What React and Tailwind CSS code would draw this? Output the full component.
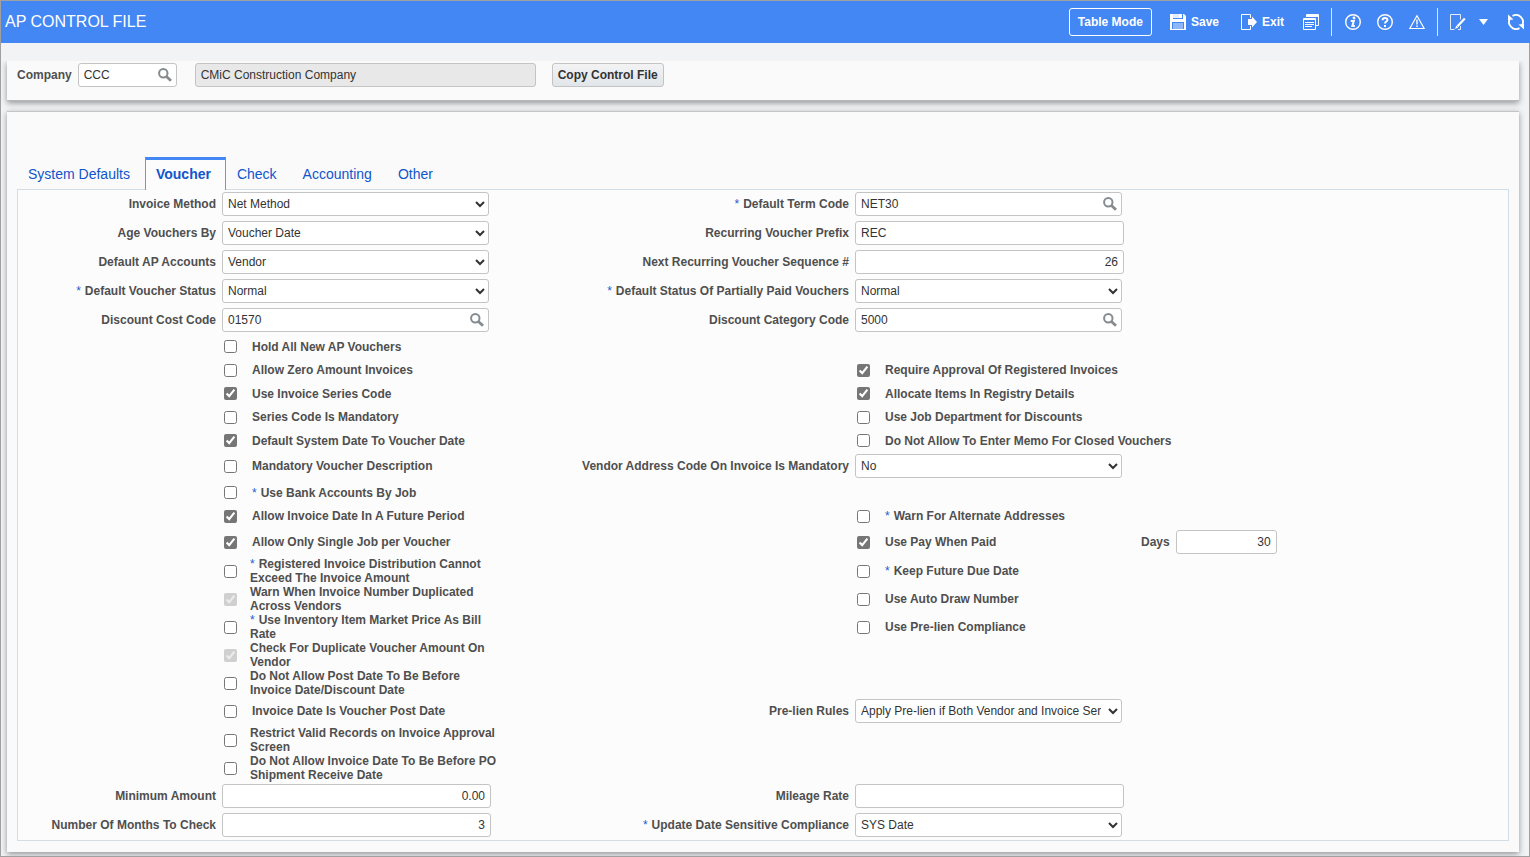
import { useId, useState } from 'react';

const TABS = ['System Defaults', 'Voucher', 'Check', 'Accounting', 'Other'];

const FIELD = 'h-6 rounded-[3px] border border-[#c4c4c4] bg-white text-xs text-[#333]';

const Star = () => <span className="mr-1 font-normal text-[#1a5dd0]">*</span>;

function Row({ size = 'field', children }) {
  const heights = { field: 'h-[29px] pb-px', double: 'h-7', check: 'h-6', tight: 'h-[23px]' };
  return (
    <div className={`grid grid-cols-[198px_269px_352px_1fr] items-center gap-x-1.5 ${heights[size]}`}>
      {children}
    </div>
  );
}

function Label({ id, star, children }) {
  return (
    <label htmlFor={id} className="text-right whitespace-nowrap">
      {star && <Star />}{children}
    </label>
  );
}

function SelectField({ label, star, options }) {
  const id = useId();
  return (
    <>
      <Label id={id} star={star}>{label}</Label>
      <select id={id} className={`${FIELD} w-[267px] pr-1 pl-px`}>
        {options.map(o => <option key={o}>{o}</option>)}
      </select>
    </>
  );
}

function TextField({ label, star, value = '', numeric }) {
  const id = useId();
  return (
    <>
      <Label id={id} star={star}>{label}</Label>
      <input id={id} type="text" defaultValue={value} className={`${FIELD} w-[269px] px-[5px] ${numeric ? 'text-right' : ''}`} />
    </>
  );
}

function Lookup({ id, value, className }) {
  return (
    <div className={`${FIELD} flex items-center pr-1 ${className}`}>
      <input id={id} type="text" defaultValue={value} className="h-full min-w-0 flex-1 bg-transparent pl-[5px] outline-none" />
      <button type="button" aria-label="Search" className="shrink-0">
        <SearchIcon />
      </button>
    </div>
  );
}

function LookupField({ label, star, value }) {
  const id = useId();
  return (
    <>
      <Label id={id} star={star}>{label}</Label>
      <Lookup id={id} value={value} className="w-[267px]" />
    </>
  );
}

function Check({ label, star, checked, disabled, wrap }) {
  const id = useId();
  return (
    <div className={`flex items-center pl-0.5 ${wrap ? 'gap-[13px]' : 'gap-[15px]'}`}>
      <input
        id={id}
        type="checkbox"
        defaultChecked={checked}
        disabled={disabled}
        className="size-[13px] shrink-0 accent-[#767676]"
      />
      <label htmlFor={id} className={wrap ? 'w-[250px] shrink-0 leading-[14px]' : 'whitespace-nowrap'}>
        {star && <Star />}{label}
      </label>
    </div>
  );
}

// Check boxes sit in the field column, so the label column stays empty
function CheckCell(props) {
  return (
    <>
      <div />
      <Check {...props} />
    </>
  );
}

/* ---------- icons ---------- */

function SearchIcon() {
  return (
    <svg className="size-3.5" viewBox="0 0 14 14" fill="none" stroke="#868b8f">
      <circle cx="5.3" cy="5.2" r="4.2" strokeWidth="2" />
      <path d="M8.400 8.400l4.600 4.400" strokeWidth="2.800" />
    </svg>
  );
}

function SaveIcon() {
  return (
    <svg className="size-4" viewBox="0 0 16 16">
      <path fill="#fff" fillRule="evenodd" d="M0 0h14l2 2v14H0zM3 0v5h10V0h-1v4H9V0zM2 8v7h12V8z" />
      <path fill="#fff" fillOpacity=".85" d="M3 0h6v4H3z" />
      <path fill="#fff" fillOpacity=".4" d="M3 9h10v6H3z" />
    </svg>
  );
}

function ExitIcon() {
  return (
    <svg className="size-4" viewBox="0 0 16 16">
      <path fill="none" stroke="#fff" d="M9.500 4V.5h-9v15h9V12" />
      <path fill="#fff" d="M7 5h4V2.500L16 8l-5 5.500V11H7z" />
    </svg>
  );
}

function WindowsIcon() {
  return (
    <svg className="size-4" viewBox="0 0 16 16" fill="none" stroke="#fff">
      <path d="M3.500 3V.5h12v11H13M4 1.500h11M4 2.500h11" />
      <path d="M.5 4.500h12v11H.5zM1 5.500h11M2 8.500h9M2 10.500h9M2 12.500h7" />
    </svg>
  );
}

function InfoIcon() {
  return (
    <svg className="size-4" viewBox="0 0 16 16" fill="none" stroke="#fff">
      <circle cx="8" cy="8" r="7.300" strokeWidth="1.400" />
      <circle cx="9" cy="4" r="1.400" fill="#fff" stroke="none" />
      <path d="M5.800 7h3L7.400 12h2.400" strokeWidth="2" />
    </svg>
  );
}

function HelpIcon() {
  return (
    <svg className="size-4" viewBox="0 0 16 16" fill="none" stroke="#fff">
      <circle cx="8" cy="8" r="7.300" strokeWidth="1.400" />
      <path d="M5.600 6.200c0-3 4.800-2.900 4.800-.3C10.400 7.600 8 7.600 8 9.600" strokeWidth="2" />
      <path d="M7 11h2v2H7z" fill="#fff" stroke="none" />
    </svg>
  );
}

function WarningIcon() {
  return (
    <svg className="size-4" viewBox="0 0 16 16" fill="none" stroke="#fff">
      <path d="M8 1.800L15.200 14.500H.8z" strokeWidth="1.200" />
      <path d="M8 5.500v5M8 11.500v1.500" strokeWidth="1.400" />
    </svg>
  );
}

function EditIcon() {
  return (
    <svg className="size-4" viewBox="0 0 16 16" fill="none" stroke="#fff">
      <path d="M10.500 5.500V.5H.5v15h4M10.500 12v3.500H8" strokeOpacity=".85" />
      <path d="M14.800 4.600L7.500 12.300" strokeWidth="2.200" />
      <path d="M6.300 11.500l2 2L5 15z" fill="#fff" stroke="none" />
    </svg>
  );
}

function RefreshIcon() {
  return (
    <svg className="size-4" viewBox="0 0 16 16" fill="none" stroke="#fff" strokeWidth="1.800">
      <path d="M4.500 1.900A7 7 0 0 1 14 11.500" />
      <path d="M11.500 14.100A7 7 0 0 1 2 4.500" />
      <path d="M10.500 10.500l5.500-.5v5.500zM5.500 5.500L0 6V.5z" fill="#fff" stroke="none" />
    </svg>
  );
}

/* ---------- page ---------- */

const Divider = () => <span className="h-7 w-px bg-white/80" />;

function Header() {
  return (
    <header className="flex h-[43px] items-center justify-between border-t border-l border-[#a0a0a0] bg-[#4387f4] pr-1.5 pl-1 text-white">
      <h1 className="text-base">AP CONTROL FILE</h1>
      <div className="flex items-center text-xs font-bold">
        <button type="button" className="mr-[18px] h-7 rounded-[3px] border border-white px-2">Table Mode</button>
        <button type="button" className="mr-[22px] flex items-center gap-[5px]"><SaveIcon />Save</button>
        <button type="button" className="mr-[19px] flex items-center gap-[5px]"><ExitIcon />Exit</button>
        <button type="button" aria-label="Windows" className="mr-3"><WindowsIcon /></button>
        <Divider />
        <div className="mr-3 ml-[13px] flex gap-4">
          <button type="button" aria-label="Information"><InfoIcon /></button>
          <button type="button" aria-label="Help"><HelpIcon /></button>
          <button type="button" aria-label="Warnings"><WarningIcon /></button>
        </div>
        <Divider />
        <button type="button" aria-label="Edit" className="mr-[13px] ml-3"><EditIcon /></button>
        <button type="button" aria-label="More" className="mr-5">
          <svg className="h-1.5 w-[9px]" viewBox="0 0 9 6"><path d="M0 0h9L4.500 6z" fill="#fff" /></svg>
        </button>
        <button type="button" aria-label="Refresh"><RefreshIcon /></button>
      </div>
    </header>
  );
}

function CompanyBar() {
  return (
    <section className="flex h-10 items-start border-b border-[#b8b8b8] bg-[#fafafa] pt-0.5 pl-2.5 shadow-[0_2px_6px_rgba(0,0,0,0.4)]">
      <label htmlFor="company" className="mr-1.5 leading-6">Company</label>
      <Lookup id="company" value="CCC" className="mr-[18px] w-[99px]" />
      <input
        type="text"
        readOnly
        aria-label="Company name"
        defaultValue="CMiC Construction Company"
        className="mr-4 h-6 w-[341px] rounded-[3px] border border-[#c4c4c4] bg-[#e8e8e8] px-[5px] text-[#333]"
      />
      <button type="button" className="h-6 rounded-[3px] border border-[#c4c4c4] bg-linear-to-b from-[#f3f3f3] to-[#e1e6ea] px-[5px] font-bold text-[#333]">
        Copy Control File
      </button>
    </section>
  );
}

function VoucherForm() {
  const daysId = useId();
  return (
    <form className="border border-[#d3dde5] bg-[#fcfcfc]">
      <Row>
        <SelectField label="Invoice Method" options={['Net Method', 'Gross Method']} />
        <LookupField label="Default Term Code" star value="NET30" />
      </Row>
      <Row>
        <SelectField label="Age Vouchers By" options={['Voucher Date', 'Invoice Date']} />
        <TextField label="Recurring Voucher Prefix" value="REC" />
      </Row>
      <Row>
        <SelectField label="Default AP Accounts" options={['Vendor']} />
        <TextField label="Next Recurring Voucher Sequence #" value="26" numeric />
      </Row>
      <Row>
        <SelectField label="Default Voucher Status" star options={['Normal']} />
        <SelectField label="Default Status Of Partially Paid Vouchers" star options={['Normal']} />
      </Row>
      <Row>
        <LookupField label="Discount Cost Code" value="01570" />
        <LookupField label="Discount Category Code" value="5000" />
      </Row>

      <Row size="tight">
        <CheckCell label="Hold All New AP Vouchers" />
      </Row>
      <Row size="check">
        <CheckCell label="Allow Zero Amount Invoices" />
        <CheckCell label="Require Approval Of Registered Invoices" checked />
      </Row>
      <Row size="tight">
        <CheckCell label="Use Invoice Series Code" checked />
        <CheckCell label="Allocate Items In Registry Details" checked />
      </Row>
      <Row size="check">
        <CheckCell label="Series Code Is Mandatory" />
        <CheckCell label="Use Job Department for Discounts" />
      </Row>
      <Row size="tight">
        <CheckCell label="Default System Date To Voucher Date" checked />
        <CheckCell label="Do Not Allow To Enter Memo For Closed Vouchers" />
      </Row>
      <Row>
        <CheckCell label="Mandatory Voucher Description" />
        <SelectField label="Vendor Address Code On Invoice Is Mandatory" options={['No', 'Yes']} />
      </Row>
      <Row size="tight">
        <CheckCell label="Use Bank Accounts By Job" star />
      </Row>
      <Row size="check">
        <CheckCell label="Allow Invoice Date In A Future Period" checked />
        <CheckCell label="Warn For Alternate Addresses" star />
      </Row>
      <Row>
        <CheckCell label="Allow Only Single Job per Voucher" checked />
        <div />
        <div className="flex items-center">
          <div className="w-[286px]"><Check label="Use Pay When Paid" checked /></div>
          <label htmlFor={daysId} className="mr-1.5">Days</label>
          <input id={daysId} type="text" defaultValue="30" className={`${FIELD} w-[101px] px-[5px] text-right`} />
        </div>
      </Row>

      <Row size="double">
        <CheckCell label={<>Registered Invoice Distribution Cannot<br />Exceed The Invoice Amount</>} star wrap />
        <CheckCell label="Keep Future Due Date" star />
      </Row>
      <Row size="double">
        <CheckCell label="Warn When Invoice Number Duplicated Across Vendors" checked disabled wrap />
        <CheckCell label="Use Auto Draw Number" />
      </Row>
      <Row size="double">
        <CheckCell label={<>Use Inventory Item Market Price As Bill<br />Rate</>} star wrap />
        <CheckCell label="Use Pre-lien Compliance" />
      </Row>
      <Row size="double">
        <CheckCell label="Check For Duplicate Voucher Amount On Vendor" checked disabled wrap />
      </Row>
      <Row size="double">
        <CheckCell label="Do Not Allow Post Date To Be Before Invoice Date/Discount Date" wrap />
      </Row>
      <Row>
        <CheckCell label="Invoice Date Is Voucher Post Date" />
        <SelectField label="Pre-lien Rules" options={['Apply Pre-lien if Both Vendor and Invoice Services']} />
      </Row>
      <Row size="double">
        <CheckCell label="Restrict Valid Records on Invoice Approval Screen" wrap />
      </Row>
      <Row size="double">
        <CheckCell label="Do Not Allow Invoice Date To Be Before PO Shipment Receive Date" wrap />
      </Row>
      <Row>
        <TextField label="Minimum Amount" value="0.00" numeric />
        <TextField label="Mileage Rate" />
      </Row>
      <Row>
        <TextField label="Number Of Months To Check" value="3" numeric />
        <SelectField label="Update Date Sensitive Compliance" star options={['SYS Date', 'Voucher Date']} />
      </Row>
    </form>
  );
}

export default function App() {
  const [tab, setTab] = useState('Voucher');

  return (
    <div className="flex min-h-screen flex-col bg-[#f1f3f5] font-['Liberation_Sans',Arial,sans-serif] text-xs">
      <Header />
      <div className="flex-1 border-r border-b border-l border-[#a0a0a0] pt-[18px] font-bold text-[#4f4f4f] [&_input]:font-normal [&_select]:font-normal">
        <main className="overflow-hidden pr-2.5 pb-1 pl-1.5">
          <CompanyBar />

          <section className="mt-2.5 border-t border-[#c4c4c4] bg-[#fafafa] px-2.5 pt-[45px] pb-[11px] shadow-[0_2px_6px_rgba(0,0,0,0.4)]">
            <div role="tablist" className="-mb-px flex text-sm font-normal text-[#1155cc]">
              {TABS.map(t => (
                <button
                  key={t}
                  type="button"
                  role="tab"
                  aria-selected={t === tab}
                  onClick={() => setTab(t)}
                  className={`relative h-[33px] border-x border-t-3 pr-3.5 pb-0.5 pl-2.5 ${
                    t === tab ? 'border-x-[#7d97ad] border-t-[#4387f4] bg-[#fcfcfc] font-bold' : 'border-transparent'
                  }`}
                >
                  {t}
                </button>
              ))}
            </div>
            <VoucherForm />
          </section>
        </main>
      </div>
    </div>
  );
}
